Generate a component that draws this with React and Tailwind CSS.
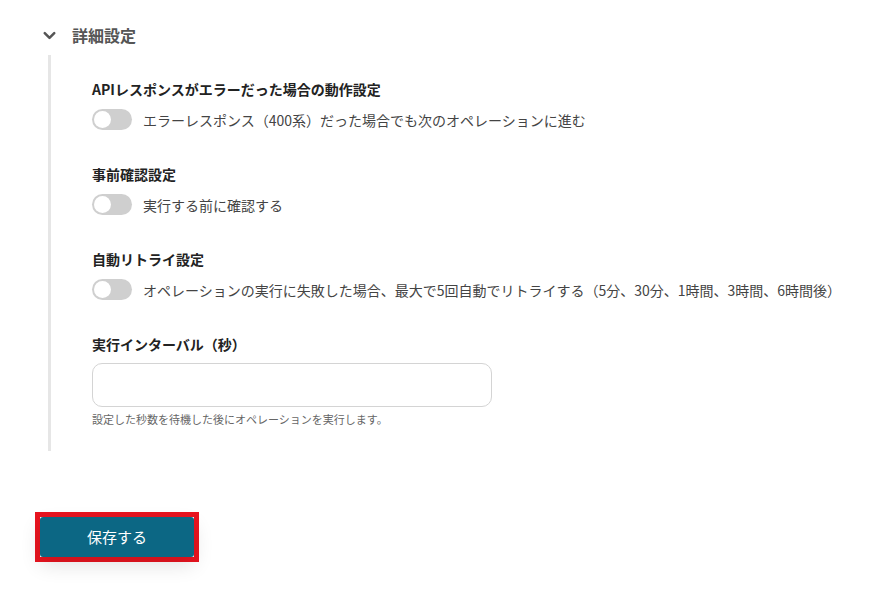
import React from "react";

function Toggle() {
  return (
    <span className="relative inline-block w-[40px] h-[21px] rounded-full bg-[#cfcfcf] shrink-0">
      <span className="absolute left-[2px] top-[2px] w-[17px] h-[17px] rounded-full bg-white"></span>
    </span>
  );
}

function ToggleSetting({ title, label }) {
  return (
    <div className="flex flex-col gap-[10px]">
      <div className="text-[14px] font-bold text-[#222] leading-5">{title}</div>
      <div className="flex items-center gap-[11px]">
        <Toggle />
        <span className="text-[14px] text-[#444] leading-5">{label}</span>
      </div>
    </div>
  );
}

export default function App() {
  return (
    <div
      className="w-[877px] h-[593px] bg-white overflow-hidden"
      style={{ fontFamily: '"Noto Sans CJK JP", "Noto Sans", sans-serif' }}
    >
      <div className="pt-[24px] pl-[40px]">
        {/* 詳細設定 header */}
        <div className="flex items-center gap-[13px] h-[22px]">
          <svg width="19" height="19" viewBox="0 0 24 24" fill="none" stroke="#555" strokeWidth="3.2" strokeLinecap="round" strokeLinejoin="round">
            <path d="M6 9l6 6 6-6" />
          </svg>
          <span className="text-[16px] font-bold text-[#555]">詳細設定</span>
        </div>

        {/* settings body with left rule */}
        <div className="ml-[8px] mt-[9px] border-l-[3px] border-[#e6e6e6] pl-[41px] pt-[24px] pb-[24px] flex flex-col gap-[34px]">
          <ToggleSetting
            title="APIレスポンスがエラーだった場合の動作設定"
            label="エラーレスポンス（400系）だった場合でも次のオペレーションに進む"
          />
          <ToggleSetting title="事前確認設定" label="実行する前に確認する" />
          <ToggleSetting
            title="自動リトライ設定"
            label="オペレーションの実行に失敗した場合、最大で5回自動でリトライする（5分、30分、1時間、3時間、6時間後）"
          />
          <div className="flex flex-col">
            <div className="text-[14px] font-bold text-[#222] leading-5">実行インターバル（秒）</div>
            <input
              type="text"
              className="mt-[9px] w-[400px] h-[44px] rounded-[10px] border border-[#d4d4d4] px-3 text-[14px] outline-none"
            />
            <div className="mt-[4px] text-[11px] text-[#666] leading-4">設定した秒数を待機した後にオペレーションを実行します。</div>
          </div>
        </div>

        {/* save button */}
        <div className="mt-[61px] ml-[-5px] inline-block border-[5px] border-[#e8141f]">
          <button className="w-[154px] h-[40px] bg-[#0c6784] text-white text-[15px] rounded-[3px] shadow-[0_8px_20px_rgba(0,0,0,0.12)]">
            保存する
          </button>
        </div>
      </div>
    </div>
  );
}
